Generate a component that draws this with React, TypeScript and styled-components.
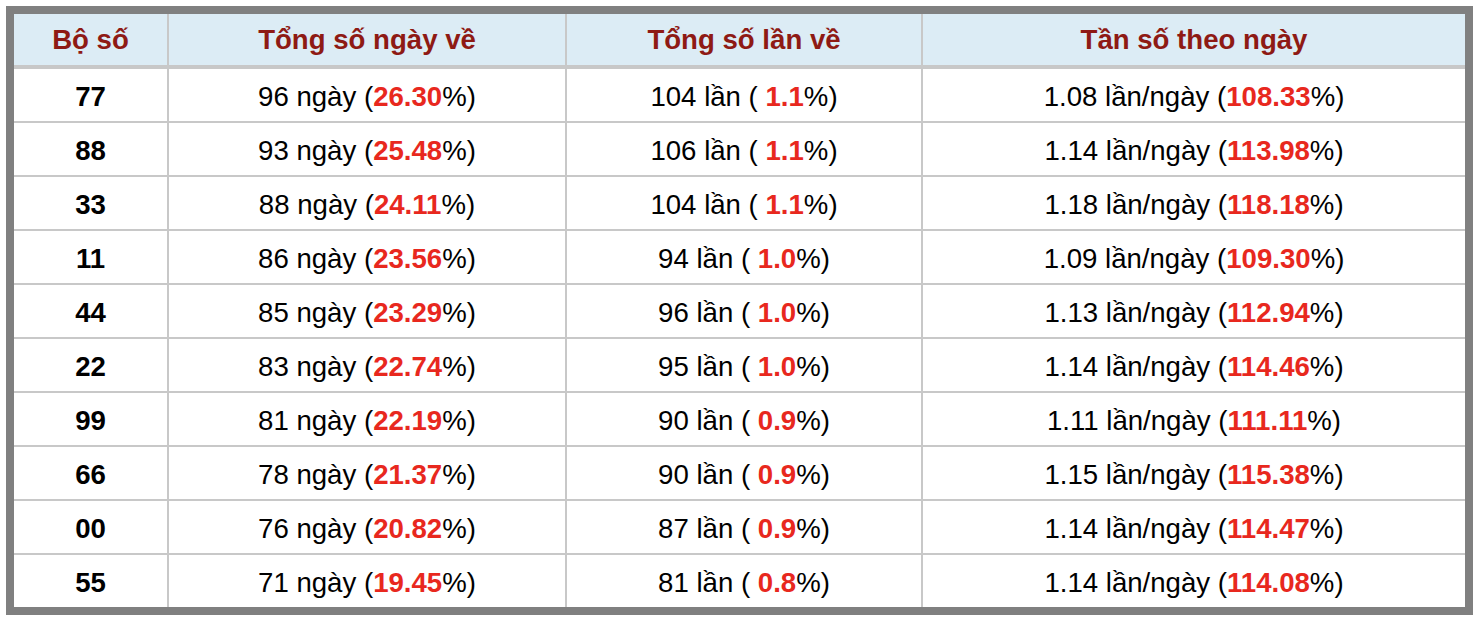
import React from 'react'
import styled, { createGlobalStyle } from 'styled-components';

type Row = {
	pair: string;
	days: number;
	dayPct: string;
	times: number;
	timePct: string;
	perDay: string;
	perDayPct: string;
};

const rows: Row[] = [
	{ pair: '77', days: 96, dayPct: '26.30', times: 104, timePct: '1.1', perDay: '1.08', perDayPct: '108.33' },
	{ pair: '88', days: 93, dayPct: '25.48', times: 106, timePct: '1.1', perDay: '1.14', perDayPct: '113.98' },
	{ pair: '33', days: 88, dayPct: '24.11', times: 104, timePct: '1.1', perDay: '1.18', perDayPct: '118.18' },
	{ pair: '11', days: 86, dayPct: '23.56', times: 94, timePct: '1.0', perDay: '1.09', perDayPct: '109.30' },
	{ pair: '44', days: 85, dayPct: '23.29', times: 96, timePct: '1.0', perDay: '1.13', perDayPct: '112.94' },
	{ pair: '22', days: 83, dayPct: '22.74', times: 95, timePct: '1.0', perDay: '1.14', perDayPct: '114.46' },
	{ pair: '99', days: 81, dayPct: '22.19', times: 90, timePct: '0.9', perDay: '1.11', perDayPct: '111.11' },
	{ pair: '66', days: 78, dayPct: '21.37', times: 90, timePct: '0.9', perDay: '1.15', perDayPct: '115.38' },
	{ pair: '00', days: 76, dayPct: '20.82', times: 87, timePct: '0.9', perDay: '1.14', perDayPct: '114.47' },
	{ pair: '55', days: 71, dayPct: '19.45', times: 81, timePct: '0.8', perDay: '1.14', perDayPct: '114.08' },
];

const GlobalStyle = createGlobalStyle`
	body {
		margin: 0;
		background: #ffffff;
		font-family: "Liberation Sans", Arial, Helvetica, sans-serif;
	}
`;

const Page = styled.div`
	padding: 6px 7px 0 6px;
`;

const Table = styled.table`
	width: 100%;
	table-layout: fixed;
	border-collapse: separate;
	border-spacing: 0;
	border: 8px solid #808080;
	font-size: 27.6px;
	color: #000;
`;

const HeadCell = styled.th<{ $first?: boolean; $w?: number }>`
	width: ${(p) => (p.$w ? `${p.$w}px` : 'auto')};
	height: 51px;
	padding: 0;
	background: #dcecf5;
	color: #8e1a14;
	font-weight: bold;
	text-align: center;
	border-bottom: 4px solid #c8c8c8;
	border-left: ${(p) => (p.$first ? 'none' : '2px solid #c8c8c8')};
`;

const Cell = styled.td<{ $first?: boolean; $top?: boolean }>`
	height: 49px;
	padding: 3px 0 0;
	text-align: center;
	white-space: nowrap;
	font-weight: ${(p) => (p.$first ? 'bold' : 'normal')};
	border-left: ${(p) => (p.$first ? 'none' : '2px solid #c8c8c8')};
	border-top: ${(p) => (p.$top ? 'none' : '2px solid #c8c8c8')};
`;

const Pct = styled.span`
	color: #e8281e;
	font-weight: bold;
`;

export default function App() {
	return (
		<Page>
			<GlobalStyle />
			<Table>
				<thead>
					<tr>
						<HeadCell $first $w={153}>Bộ số</HeadCell>
						<HeadCell $w={396}>Tổng số ngày về</HeadCell>
						<HeadCell $w={354}>Tổng số lần về</HeadCell>
						<HeadCell>Tần số theo ngày</HeadCell>
					</tr>
				</thead>
				<tbody>
					{rows.map((r, i) => (
						<tr key={r.pair}>
							<Cell $first $top={i === 0}>{r.pair}</Cell>
							<Cell $top={i === 0}>
								{r.days} ngày (<Pct>{r.dayPct}</Pct>%)
							</Cell>
							<Cell $top={i === 0}>
								{r.times} lần ( <Pct>{r.timePct}</Pct>%)
							</Cell>
							<Cell $top={i === 0}>
								{r.perDay} lần/ngày (<Pct>{r.perDayPct}</Pct>%)
							</Cell>
						</tr>
					))}
				</tbody>
			</Table>
		</Page>
	)
}
